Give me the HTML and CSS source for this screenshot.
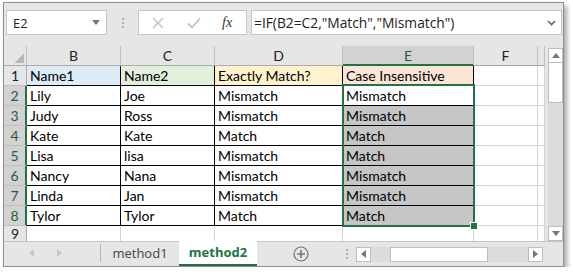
FILE: index.html
```html
<!DOCTYPE html>
<html lang="en">
<head>
    <meta charset="UTF-8" />
    <title>method2 - Excel</title>
    <link rel="stylesheet" href="styles.css">
</head>
<body>
<div class="window">
    <div class="formula-bar">
        <div class="name-box">
            <span>E2</span>
            <svg class="caret" width="8" height="5" viewBox="0 0 8 5"><path d="M0 0h8L4 5z" fill="#777"/></svg>
        </div>
        <div class="grip"><i></i><i></i><i></i></div>
        <div class="fx-box">
            <svg width="12" height="12" viewBox="0 0 12 12"><path d="M1 1L11 11M11 1L1 11" stroke="#c2c2c2" stroke-width="1.4" fill="none"/></svg>
            <svg width="14" height="12" viewBox="0 0 14 12"><path d="M1 6.5L5 10.5L13 1.5" stroke="#c2c2c2" stroke-width="1.8" fill="none"/></svg>
            <span class="fx">fx</span>
        </div>
        <div class="formula-input">
            <span>=IF(B2=C2,"Match","Mismatch")</span>
            <svg class="chev" width="9" height="6" viewBox="0 0 9 6"><path d="M1 1L4.5 4.5L8 1" stroke="#666" stroke-width="1.6" fill="none"/></svg>
        </div>
    </div>

    <div class="sheet">
        <div class="grid">
            <div class="corner"></div>
            <div class="colhead">B</div>
            <div class="colhead">C</div>
            <div class="colhead">D</div>
            <div class="colhead active">E</div>
            <div class="colhead">F</div>
            <div class="colhead"></div>

            <div class="rowhead">1</div>
            <div class="cell data hb">Name1</div>
            <div class="cell data hc">Name2</div>
            <div class="cell data hd">Exactly Match?</div>
            <div class="cell data he">Case Insensitive</div>
            <div class="cell"></div>
            <div class="cell"></div>

            <div class="rowhead sel">2</div>
            <div class="cell data">Lily</div>
            <div class="cell data">Joe</div>
            <div class="cell data">Mismatch</div>
            <div class="cell data current">Mismatch<div class="selection"><span class="handle"></span></div></div>
            <div class="cell"></div>
            <div class="cell"></div>

            <div class="rowhead sel">3</div>
            <div class="cell data">Judy</div>
            <div class="cell data">Ross</div>
            <div class="cell data">Mismatch</div>
            <div class="cell data picked">Mismatch</div>
            <div class="cell"></div>
            <div class="cell"></div>

            <div class="rowhead sel">4</div>
            <div class="cell data">Kate</div>
            <div class="cell data">Kate</div>
            <div class="cell data">Match</div>
            <div class="cell data picked">Match</div>
            <div class="cell"></div>
            <div class="cell"></div>

            <div class="rowhead sel">5</div>
            <div class="cell data">Lisa</div>
            <div class="cell data">lisa</div>
            <div class="cell data">Mismatch</div>
            <div class="cell data picked">Match</div>
            <div class="cell"></div>
            <div class="cell"></div>

            <div class="rowhead sel">6</div>
            <div class="cell data">Nancy</div>
            <div class="cell data">Nana</div>
            <div class="cell data">Mismatch</div>
            <div class="cell data picked">Mismatch</div>
            <div class="cell"></div>
            <div class="cell"></div>

            <div class="rowhead sel">7</div>
            <div class="cell data">Linda</div>
            <div class="cell data">Jan</div>
            <div class="cell data">Mismatch</div>
            <div class="cell data picked">Mismatch</div>
            <div class="cell"></div>
            <div class="cell"></div>

            <div class="rowhead sel">8</div>
            <div class="cell data">Tylor</div>
            <div class="cell data">Tylor</div>
            <div class="cell data">Match</div>
            <div class="cell data picked">Match</div>
            <div class="cell"></div>
            <div class="cell"></div>

            <div class="rowhead last">9</div>
            <div class="cell"></div>
            <div class="cell"></div>
            <div class="cell"></div>
            <div class="cell"></div>
            <div class="cell"></div>
            <div class="cell"></div>
        </div>

        <div class="vscroll">
            <div class="sbtn"><svg width="8" height="5" viewBox="0 0 8 5"><path d="M0 5h8L4 0z" fill="#777"/></svg></div>
            <div class="vthumb"></div>
            <div class="vtrack"></div>
            <div class="sbtn"><svg width="8" height="5" viewBox="0 0 8 5"><path d="M0 0h8L4 5z" fill="#777"/></svg></div>
        </div>
    </div>

    <div class="tab-bar">
        <div class="tab-nav">
            <svg width="5" height="8" viewBox="0 0 5 8"><path d="M5 0v8L0 4z" fill="#c4c4c4"/></svg>
            <svg width="5" height="8" viewBox="0 0 5 8"><path d="M0 0v8L5 4z" fill="#c4c4c4"/></svg>
        </div>
        <div class="tab">method1</div>
        <div class="tab active">method2</div>
        <div class="add-sheet">
            <svg width="16" height="16" viewBox="0 0 16 16"><circle cx="8" cy="8" r="7" fill="none" stroke="#777" stroke-width="1.2"/><path d="M8 4v8M4 8h8" stroke="#777" stroke-width="1.6"/></svg>
        </div>
        <div class="grip small"><i></i><i></i><i></i></div>
        <div class="hscroll">
            <div class="sbtn"><svg width="5" height="8" viewBox="0 0 5 8"><path d="M5 0v8L0 4z" fill="#777"/></svg></div>
            <div class="htrack"></div>
            <div class="hthumb"></div>
            <div class="htrack wide"></div>
            <div class="sbtn"><svg width="5" height="8" viewBox="0 0 5 8"><path d="M0 0v8L5 4z" fill="#777"/></svg></div>
        </div>
    </div>
</div>
</body>
</html>
```

FILE: styles.css
```css
body {
  margin: 0;
  background: #fff;
  font-family: "Open Sans", Arial, sans-serif;
}

.window {
  margin: 2px 0 0 3px;
  width: 561px;
  height: 265px;
  box-sizing: border-box;
  border: 1px solid #8e8e8e;
  background: #e6e6e6;
  box-shadow: 3px 4px 5px rgba(0, 0, 0, 0.35);
  overflow: hidden;
}

/* formula bar */
.formula-bar {
  height: 43px;
  box-sizing: border-box;
  padding: 7px 1px 0 2px;
  display: flex;
  align-items: flex-start;
}

.name-box {
  width: 101px;
  height: 25px;
  box-sizing: border-box;
  background: #fff;
  border: 1px solid #c6c6c6;
  display: flex;
  align-items: center;
  justify-content: space-between;
  padding: 0 6px 0 6px;
  font-size: 13px;
  color: #222;
}

.grip {
  width: 31px;
  height: 25px;
  display: flex;
  flex-direction: column;
  align-items: center;
  justify-content: center;
  gap: 2px;
}

.grip i {
  width: 2px;
  height: 2px;
  background: #b0b0b0;
}

.fx-box {
  width: 109px;
  height: 25px;
  box-sizing: border-box;
  background: #fff;
  border: 1px solid #c6c6c6;
  display: flex;
  align-items: center;
  padding-left: 13px;
  gap: 23px;
}

.fx {
  font-family: "Liberation Serif", serif;
  font-style: italic;
  font-size: 14px;
  color: #333;
  margin-left: -2px;
}

.formula-input {
  margin-left: 4px;
  flex: 1;
  height: 25px;
  box-sizing: border-box;
  background: #fff;
  border: 1px solid #c6c6c6;
  display: flex;
  align-items: center;
  justify-content: space-between;
  padding: 0 5px 0 2px;
  font-size: 13.8px;
  color: #222;
}

/* grid */
.sheet {
  height: 195px;
  display: flex;
}

.grid {
  width: 541px;
  display: grid;
  grid-template-columns: 23px 94px 94px 128px 131px 64px 7px;
  grid-auto-rows: 20px;
  background: #fff;
  overflow: hidden;
  font-family: Lato, "Liberation Sans", sans-serif;
  font-size: 14px;
}

.corner,
.colhead,
.rowhead,
.cell {
  box-sizing: border-box;
  border-right: 1px solid #d4d4d4;
  border-bottom: 1px solid #d4d4d4;
}

.corner {
  background: #e6e6e6 linear-gradient(135deg, transparent 62%, #b8b8b8 62%) no-repeat 8px 5px / 12px 12px;
  border-right-color: #c0c0c0;
  border-bottom-color: #ababab;
}

.colhead {
  background: #e6e6e6;
  border-right-color: #c0c0c0;
  border-bottom-color: #ababab;
  text-align: center;
  line-height: 19px;
  color: #222;
}

.colhead.active {
  background: #d2d2d2;
  color: #1e5e3a;
  border-bottom: 2px solid #217346;
}

.rowhead {
  background: #e6e6e6;
  border-right-color: #ababab;
  border-bottom-color: #c0c0c0;
  text-align: center;
  line-height: 19px;
  color: #222;
}

.rowhead.last {
  line-height: 16px;
}

.rowhead.sel {
  background: #d2d2d2;
  color: #1e5e3a;
  border-right: 2px solid #217346;
}

.cell {
  padding-left: 3px;
  line-height: 19px;
  color: #000;
  white-space: nowrap;
}

.cell.data {
  border-right-color: #000;
  border-bottom-color: #000;
}

.hb { background: #ddebf7; }
.hc { background: #e2efda; }
.hd { background: #fff2cc; }
.he { background: #fce4d6; }

.picked {
  background: #c6c6c6;
  box-shadow: inset 1px 0 #fff;
}

.current {
  position: relative;
}

.selection {
  position: absolute;
  left: -1px;
  top: -2px;
  width: 133px;
  height: 143px;
  box-sizing: border-box;
  border: 2px solid #217346;
  pointer-events: none;
}

.handle {
  position: absolute;
  right: -5px;
  bottom: -5px;
  width: 6px;
  height: 6px;
  background: #217346;
  border: 1px solid #fff;
}

/* scroll bars */
.vscroll {
  width: 18px;
  padding: 2px 0 0 3px;
  box-sizing: border-box;
  display: flex;
  flex-direction: column;
}

.sbtn {
  width: 15px;
  height: 15px;
  box-sizing: border-box;
  background: #fff;
  border: 1px solid #bdbdbd;
  display: flex;
  align-items: center;
  justify-content: center;
}

.vthumb {
  width: 15px;
  height: 40px;
  box-sizing: border-box;
  background: #fff;
  border: 1px solid #bdbdbd;
  border-top: none;
}

.vtrack {
  flex: 1;
  background: #dcdcdc;
  width: 15px;
}

.tab-bar {
  height: 25px;
  box-sizing: border-box;
  border-top: 1px solid #c6c6c6;
  display: flex;
  align-items: stretch;
}

.tab-nav {
  width: 97px;
  display: flex;
  align-items: center;
  gap: 23px;
  padding-left: 25px;
  box-sizing: border-box;
  border-right: 1px solid #b4b4b4;
  margin: 2px 0 4px;
}

.tab {
  width: 78px;
  text-align: center;
  font-size: 13px;
  line-height: 22px;
  color: #444;
  border-bottom: 2px solid transparent;
}

.tab.active {
  background: #fff;
  color: #217346;
  font-weight: bold;
  border-bottom-color: #217346;
  margin-top: -1px;
  line-height: 23px;
}

.add-sheet {
  width: 84px;
  display: flex;
  align-items: center;
  padding-left: 36px;
  box-sizing: border-box;
}

.grip.small {
  width: 12px;
  height: auto;
}

.hscroll {
  margin-left: 3px;
  width: 187px;
  display: flex;
  align-items: center;
}

.htrack {
  width: 19px;
  height: 15px;
  background: #dcdcdc;
}

.htrack.wide {
  width: 40px;
}

.hthumb {
  width: 98px;
  height: 15px;
  box-sizing: border-box;
  background: #fff;
  border: 1px solid #bdbdbd;
}
```
